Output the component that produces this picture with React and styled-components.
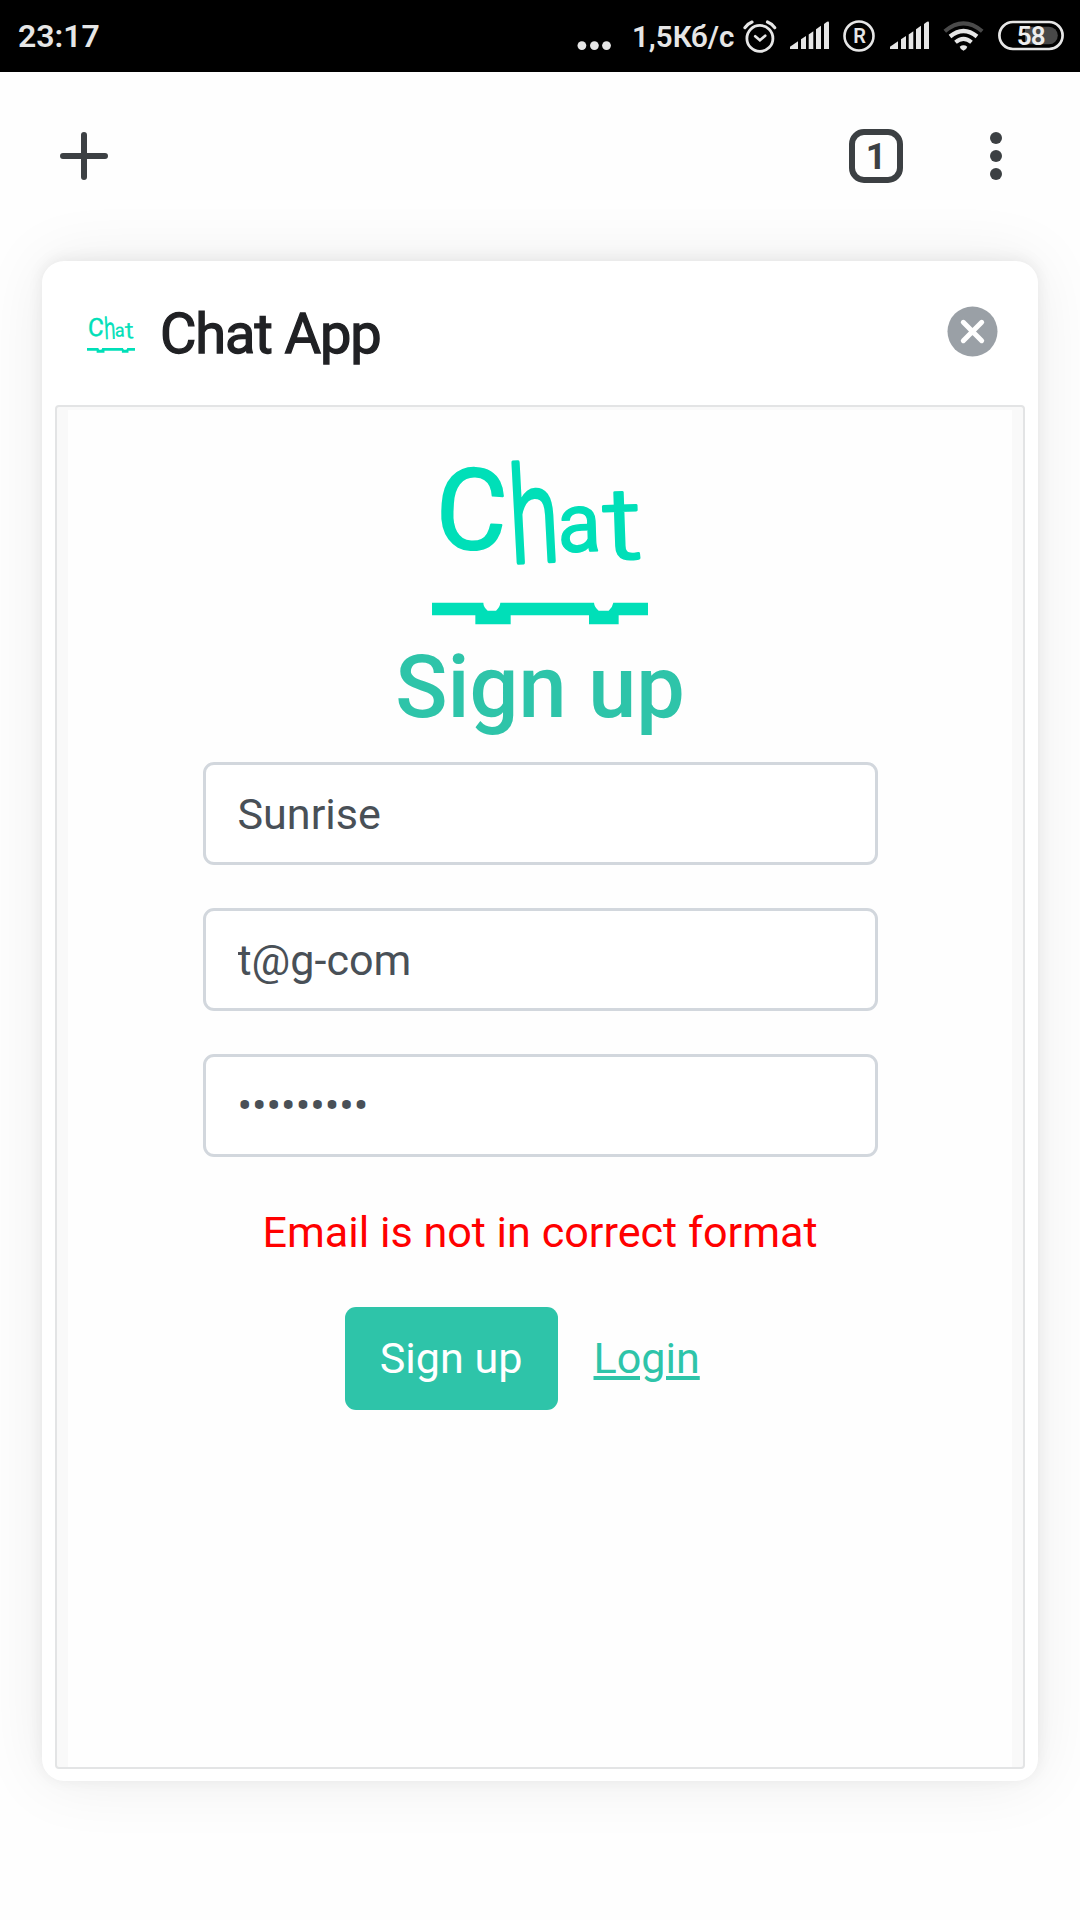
import React, { useState } from "react";
import styled, { createGlobalStyle } from "styled-components";

const GlobalStyle = createGlobalStyle`
  * { box-sizing: border-box; }
  body {
    margin: 0;
    background: #fefefe;
    font-family: Roboto, "Noto Sans", sans-serif;
  }
`;

const Screen = styled.div`
  display: flex;
  flex-direction: column;
  width: 1080px;
  height: 1920px;
  overflow: hidden;
  background: #fefefe;
`;

/* ---------- status bar ---------- */

const StatusBar = styled.header`
  display: flex;
  align-items: center;
  height: 72px;
  padding: 0 16px 0 18px;
  background: #000;
  color: #e6e6e6;
`;

const Clock = styled.time`
  flex: 1;
  font-size: 32px;
  font-weight: 600;
  line-height: 72px;
`;

const NetSpeed = styled.span`
  width: 103px;
  margin: 0 8px 0 21px;
  font-size: 29.5px;
  font-weight: 600;
  line-height: 72px;
  padding-top: 1px;
  white-space: nowrap;
`;

const StatusIcon = styled.svg`
  display: block;
  flex: none;
  width: ${(p) => p.$w}px;
  height: 72px;
  margin-right: ${(p) => p.$gap || 0}px;
  font-family: Roboto, sans-serif;
`;

function Signal({ gap }) {
  return (
    <StatusIcon $w={39} $gap={gap} viewBox="0 0 39 72">
      <g fill="#e6e6e6">
        <path d="M0 49v-2.2l8-5.6V49z" />
        <path d="M11 49V39.3l5-3.3v13z" />
        <path d="M18.7 49V34.5l4.6-3.3V49z" />
        <path d="M26 49V29.3l5-3.5V49z" />
        <path d="M34 49V24l3-2.3q2-.8 2 1V49z" />
      </g>
    </StatusIcon>
  );
}

/* ---------- browser toolbar ---------- */

const Toolbar = styled.nav`
  display: flex;
  align-items: center;
  justify-content: space-between;
  height: 168px;
  padding: 0 78px 0 60px;
`;

const ToolbarGroup = styled.div`
  display: flex;
  align-items: center;
  gap: 87px;
`;

const ToolButton = styled.button`
  display: flex;
  padding: 0;
  border: 0;
  background: none;
`;

const TabCounter = styled.button`
  display: flex;
  align-items: center;
  justify-content: center;
  width: 54px;
  height: 54px;
  padding: 2px 0 0;
  border: 6px solid #3c4043;
  border-radius: 15px;
  background: none;
  color: #3c4043;
  font: 700 36px/42px Roboto, sans-serif;
`;

/* ---------- tab card ---------- */

const TabCard = styled.main`
  display: flex;
  flex-direction: column;
  width: 996px;
  height: 1520px;
  margin: 21px 0 0 42px;
  padding: 0 13px 12px;
  border-radius: 22px;
  background: #fff;
  box-shadow: 0 0 66px rgba(0, 0, 0, 0.075), 0 -2px 16px rgba(0, 0, 0, 0.07);
`;

const TabHeader = styled.div`
  display: flex;
  align-items: center;
  height: 144px;
  padding: 0 27px 3px 32px;
`;

const TabTitle = styled.span`
  flex: 1;
  margin: 4px 0 0 25px;
  color: #202124;
  font-size: 56px;
  line-height: 66px;
  letter-spacing: -1.1px;
  -webkit-text-stroke: 1.3px #202124;
`;

const Favicon = styled.div`
  padding-top: 5px;
`;

const Preview = styled.section`
  flex: 1;
  padding: 3px 11px 0;
  border: 2px solid #e3e4e5;
  border-radius: 4px;
  background: #f9f9f9;
`;

const Page = styled.div`
  display: flex;
  flex-direction: column;
  align-items: center;
  height: 100%;
  padding-top: 49px;
  background: #fefefe;
`;

const Heading = styled.h2`
  margin: 11px 0 22px;
  color: #2ec4a9;
  font-size: 86.4px;
  font-weight: 500;
  line-height: 104px;
`;

const Form = styled.form`
  display: flex;
  flex-direction: column;
  gap: 43px;
  width: 675px;
`;

const Field = styled.input`
  width: 100%;
  height: 103px;
  padding: ${(p) => (p.type === "password" ? 0 : 2)}px 32px 0;
  border: 3px solid #d2d7dd;
  border-radius: 11px;
  background: #fff;
  color: #495057;
  font: 400 43.1px/60px Roboto, sans-serif;
  outline: none;
`;

const ErrorText = styled.p`
  margin: 0;
  color: #ff0000;
  font-size: 43.15px;
  line-height: 65px;
  text-align: center;
`;

const Actions = styled.div`
  display: flex;
  align-items: center;
  gap: 36px;
  margin-top: -1px;
  padding-left: 142px;
`;

const SubmitButton = styled.button`
  width: 213px;
  height: 103px;
  padding: 0;
  border: 0;
  border-radius: 11px;
  background: #2ec4a9;
  color: #fff;
  font: 400 43.1px/103px Roboto, sans-serif;
`;

const LoginLink = styled.a`
  color: #2ec4a9;
  font-size: 43.1px;
  line-height: 65px;
  text-decoration: underline;
`;

const LogoSvg = styled.svg`
  display: block;
  flex: none;
  width: ${(p) => p.$w}px;
  height: ${(p) => p.$w * 0.77}px;
  font-family: Roboto, sans-serif;
  overflow: visible;
`;

function ChatLogo({ width }) {
  return (
    <LogoSvg $w={width} viewBox="36 56 648 499" fill="#00dfb8">
      <g stroke="#00dfb8" strokeLinejoin="round">
        <text transform="translate(42 320) rotate(3) scale(.97 1)" fontSize="338" strokeWidth="6">C</text>
        <text transform="translate(274 368) rotate(-3) scale(.68 1)" fontSize="400" fontWeight="300" strokeWidth="13">h</text>
        <text transform="translate(414 336) rotate(-2) scale(.97 1)" fontSize="250" strokeWidth="4">a</text>
        <text transform="translate(552 357) rotate(-2) scale(1.22 1)" fontSize="300" fontWeight="300" strokeWidth="8">t</text>
      </g>
      <path d="M36 487H190Q190 500 203 511H228Q240 500 241 487H522Q523 500 536 511H566Q578 500 580 487H684V525H596V552H507V525H272V552H166V525H36Z" />
    </LogoSvg>
  );
}

export default function App() {
  const [name, setName] = useState("Sunrise");
  const [email, setEmail] = useState("t@g-com");
  const [password, setPassword] = useState("sunrise12");

  return (
    <>
      <GlobalStyle />
      <Screen>
        <StatusBar>
          <Clock>23:17</Clock>
          <StatusIcon $w={34} viewBox="0 0 34 72" fill="#e6e6e6">
            <circle cx="4.9" cy="45.6" r="4.4" />
            <circle cx="17.4" cy="45.6" r="4.4" />
            <circle cx="29.5" cy="45.6" r="4.4" />
          </StatusIcon>
          <NetSpeed>1,5Кб/с</NetSpeed>
          <StatusIcon $w={34} $gap={13} viewBox="0 0 34 72" fill="none" stroke="#e6e6e6" strokeLinecap="round">
            <circle cx="16.9" cy="38.4" r="13" strokeWidth="2.8" />
            <path d="M12.2 36.3l4.7 4 5.3-4.6" strokeWidth="2.7" />
            <path d="M2 27.7q2.8-4 7-5.6M24.5 22q4.4 1.6 7.2 5.7" strokeWidth="3.2" />
          </StatusIcon>
          <Signal gap={14} />
          <StatusIcon $w={32} $gap={15} viewBox="0 0 32 72">
            <circle cx="16" cy="36" r="14.5" fill="none" stroke="#e6e6e6" strokeWidth="2.6" />
            <text x="16.5" y="43" textAnchor="middle" fontSize="20" fontWeight="600" fill="#e6e6e6">R</text>
          </StatusIcon>
          <Signal gap={14} />
          <StatusIcon $w={41} $gap={14} viewBox="0 0 41 72" fill="none" stroke="#e6e6e6">
            <path d="M1.8 31.3Q20.5 15.5 39.2 31.3" stroke="#4a4a4a" strokeWidth="4" />
            <path d="M7 36.5Q20.5 25.5 34 36.5" strokeWidth="4.2" />
            <path d="M12.5 42.3Q20.5 35.5 28.5 42.3" strokeWidth="4" />
            <path d="M16.7 46.7q3.8-2.8 7.6 0q-.5 2.5-3.8 4q-3.3-1.5-3.8-4z" fill="#e6e6e6" stroke="none" />
          </StatusIcon>
          <StatusIcon $w={66} viewBox="0 0 66 72">
            <path d="M27 26.7h24a8.8 8.8 0 0 1 0 17.6H27z" fill="#484848" />
            <rect x="1.4" y="22" width="63.2" height="27" rx="13.5" fill="none" stroke="#e6e6e6" strokeWidth="2.7" />
            <text x="32.7" y="44.8" textAnchor="middle" fontSize="26" fontWeight="600" letterSpacing="-1" fill="#eee">58</text>
          </StatusIcon>
        </StatusBar>

        <Toolbar>
          <ToolButton aria-label="New tab">
            <svg width="48" height="48" viewBox="0 0 48 48">
              <path d="M24 3v42M3 24h42" stroke="#3c4043" strokeWidth="6" strokeLinecap="round" />
            </svg>
          </ToolButton>
          <ToolbarGroup>
            <TabCounter>1</TabCounter>
            <ToolButton aria-label="Menu">
              <svg width="12" height="48" viewBox="0 0 12 48" fill="#3c4043">
                <circle cx="6" cy="6" r="6" />
                <circle cx="6" cy="24" r="6" />
                <circle cx="6" cy="42" r="6" />
              </svg>
            </ToolButton>
          </ToolbarGroup>
        </Toolbar>

        <TabCard>
          <TabHeader>
            <Favicon>
              <ChatLogo width={48} />
            </Favicon>
            <TabTitle>Chat App</TabTitle>
            <ToolButton aria-label="Close tab">
              <svg width="51" height="51" viewBox="0 0 51 51">
                <circle cx="25.5" cy="25.5" r="25" fill="#9aa0a6" />
                <path d="M16.3 16.3l18.4 18.4M34.7 16.3L16.3 34.7" stroke="#fff" strokeWidth="5" strokeLinecap="round" />
              </svg>
            </ToolButton>
          </TabHeader>
          <Preview>
            <Page>
              <ChatLogo width={216} />
              <Heading>Sign up</Heading>
              <Form onSubmit={(e) => e.preventDefault()}>
                <Field value={name} onChange={(e) => setName(e.target.value)} />
                <Field value={email} onChange={(e) => setEmail(e.target.value)} />
                <Field type="password" value={password} onChange={(e) => setPassword(e.target.value)} />
                <ErrorText>Email is not in correct format</ErrorText>
                <Actions>
                  <SubmitButton type="submit">Sign up</SubmitButton>
                  <LoginLink href="#">Login</LoginLink>
                </Actions>
              </Form>
            </Page>
          </Preview>
        </TabCard>
      </Screen>
    </>
  );
}
